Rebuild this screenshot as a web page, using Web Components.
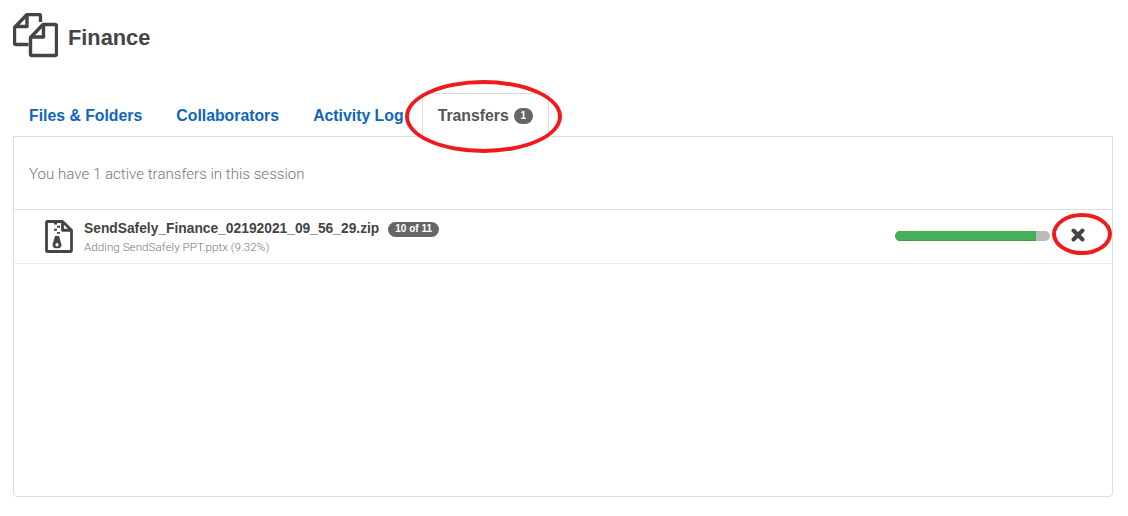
<!DOCTYPE html>
<html>
<head>
<meta charset="utf-8">
<title>Finance</title>
<style>
body { margin: 0; background: #fff; font-family: "Liberation Sans", Arial, sans-serif; color: #444; }
</style>
</head>
<body>
<workspace-page>
  <page-title slot="title">Finance</page-title>
  <tab-bar slot="tabs">
    <tab-link>Files &amp; Folders</tab-link>
    <tab-link>Collaborators</tab-link>
    <tab-link>Activity Log</tab-link>
    <tab-link active>Transfers <count-badge>1</count-badge></tab-link>
  </tab-bar>
  <transfer-panel slot="panel" summary="You have 1 active transfers in this session">
    <transfer-row name="SendSafely_Finance_02192021_09_56_29.zip" count="10 of 11" status="Adding SendSafely PPT.pptx (9.32%)" percent="91"></transfer-row>
  </transfer-panel>
  <red-ring slot="rings" style="left:405px;top:80px;width:157px;height:73px"></red-ring>
  <red-ring slot="rings" style="left:1052px;top:213px;width:60px;height:42px"></red-ring>
</workspace-page>

<script>
class WorkspacePage extends HTMLElement {
  connectedCallback() {
    this.attachShadow({ mode: 'open' }).innerHTML = `
    <style>
    :host { display: block; position: relative; width: 1128px; height: 516px; overflow: hidden; }
    .wrap { display: flex; flex-direction: column; padding: 13px 15px 0 13px; height: 516px; box-sizing: border-box; }
    </style>
    <div class="wrap">
      <slot name="title"></slot>
      <slot name="tabs"></slot>
      <slot name="panel"></slot>
    </div>
    <slot name="rings"></slot>`;
  }
}

class PageTitle extends HTMLElement {
  connectedCallback() {
    this.attachShadow({ mode: 'open' }).innerHTML = `
    <style>
    :host { display: flex; align-items: center; gap: 10px; height: 45px; margin-bottom: 35px; }
    svg { width: 45px; height: 45px; flex: none; }
    span { font-size: 21.800px; font-weight: bold; color: #444; padding-top: 5px; }
    </style>
    <svg viewBox="0 0 45 45" fill="none" stroke="#444" stroke-width="3.400" stroke-linejoin="round">
      <path d="M15.500 31.500H3q-1.500 0-1.500-1.500V14.500L14 1.500H26q1.500 0 1.500 1.500V9"/>
      <path d="M14 2.500V13.500H2.500"/>
      <path d="M30 11.500H42q1.500 0 1.500 1.500V41q0 1.500-1.500 1.500H19q-1.500 0-1.500-1.500V24.500Z"/>
      <path d="M30.500 12.500V24H18.500"/>
    </svg>
    <span><slot></slot></span>`;
  }
}

class TabBar extends HTMLElement {
  connectedCallback() {
    this.attachShadow({ mode: 'open' }).innerHTML = `
    <style>
    :host { display: flex; height: 44px; position: relative; z-index: 1; margin-bottom: -1px; }
    </style>
    <slot></slot>`;
  }
}

class TabLink extends HTMLElement {
  connectedCallback() {
    this.attachShadow({ mode: 'open' }).innerHTML = `
    <style>
    :host { display: flex; align-items: center; gap: 5px; box-sizing: border-box; height: 44px; padding: 0 15px; margin-right: 2.100px; white-space: nowrap; font-size: 15.800px; font-weight: bold; color: #0d66bb; border: 1px solid transparent; border-bottom: 0; }
    :host([active]) { color: #555; background: #fff; border-color: #ddd; }
    </style>
    <slot></slot>`;
  }
}

class CountBadge extends HTMLElement {
  connectedCallback() {
    this.attachShadow({ mode: 'open' }).innerHTML = `
    <style>
    :host { display: inline-flex; align-items: center; justify-content: center; height: 16px; min-width: 19px; box-sizing: border-box; padding: 0 6px; border-radius: 8px; background: #666; color: #fff; font-size: 10px; font-weight: bold; }
    </style>
    <slot></slot>`;
  }
}

class TransferPanel extends HTMLElement {
  connectedCallback() {
    this.attachShadow({ mode: 'open' }).innerHTML = `
    <style>
    :host { display: block; box-sizing: border-box; width: 1100px; height: 361px; border: 1px solid #ddd; border-radius: 0 0 4px 4px; }
    .summary { height: 73px; box-sizing: border-box; padding: 2px 15px 0; display: flex; align-items: center; font-family: Roboto, "Liberation Sans", sans-serif; font-weight: 300; font-size: 15.100px; color: #777; border-bottom: 1px solid #ddd; }
    </style>
    <div class="summary">${this.getAttribute('summary')}</div>
    <slot></slot>`;
  }
}

class TransferRow extends HTMLElement {
  connectedCallback() {
    const pct = this.getAttribute('percent');
    this.attachShadow({ mode: 'open' }).innerHTML = `
    <style>
    :host { display: flex; align-items: center; box-sizing: border-box; height: 54px; padding: 0 0 0 31px; border-bottom: 1px solid #eee; }
    svg.zip { width: 28px; height: 33px; flex: none; margin: 0 11px 1px 0; }
    .text { flex: 1; min-width: 0; padding-top: 2px; }
    .name { display: flex; align-items: center; gap: 9px; font-size: 13.800px; font-weight: bold; color: #444; line-height: 18px; }
    .count { display: inline-flex; align-items: center; height: 15px; padding: 0 7px; border-radius: 8px; background: #666; color: #fff; font-size: 10px; }
    .status { font-family: Roboto, "Liberation Sans", sans-serif; font-weight: 300; font-size: 11.700px; color: #777; line-height: 16px; margin-top: 1px; }
    .bar { width: 155px; height: 10px; border-radius: 5px; background: #bbb; overflow: hidden; flex: none; margin: 0 21px 1px 0; }
    .fill { height: 100%; background: #47ae5a; box-shadow: inset 0 -1px 0 #3d9a4e; }
    svg.x { width: 14px; height: 14px; flex: none; margin: 0 27px 3px 0; }
    </style>
    <svg class="zip" viewBox="0 0 28 32" preserveAspectRatio="none" fill="none" stroke="#444" stroke-width="2.800" stroke-linejoin="round">
      <path d="M2.500 1.500H17.500L26.500 10V29.500q0 1-1 1H2.500q-1 0-1-1V2.500q0-1 1-1Z"/>
      <path d="M17.500 2V10H26"/>
      <path d="M9 3.500h3M12 6.500h3M9 9.500h3M12 12.500h3" stroke-width="1.800"/>
      <path d="M10 15.500h4l2.500 8.500q0 3.500-4.500 3.500T7.500 24Z" fill="#444" stroke="none"/>
      <circle cx="12" cy="24" r="1.600" fill="#fff" stroke="none"/>
    </svg>
    <div class="text">
      <div class="name"><span>${this.getAttribute('name')}</span><span class="count">${this.getAttribute('count')}</span></div>
      <div class="status">${this.getAttribute('status')}</div>
    </div>
    <div class="bar"><div class="fill" style="width:${pct}%"></div></div>
    <svg class="x" viewBox="0 0 14 14"><path d="M2.500 2.500L11.500 11.500M11.500 2.500L2.500 11.500" stroke="#444" stroke-width="4" stroke-linecap="round"/></svg>`;
  }
}

class RedRing extends HTMLElement {
  connectedCallback() {
    this.attachShadow({ mode: 'open' }).innerHTML = `
    <style>
    :host { display: block; position: absolute; box-sizing: border-box; border: 4px solid #f0191c; border-radius: 50%; z-index: 5; pointer-events: none; }
    </style>`;
  }
}

customElements.define('workspace-page', WorkspacePage);
customElements.define('page-title', PageTitle);
customElements.define('tab-bar', TabBar);
customElements.define('tab-link', TabLink);
customElements.define('count-badge', CountBadge);
customElements.define('transfer-panel', TransferPanel);
customElements.define('transfer-row', TransferRow);
customElements.define('red-ring', RedRing);
</script>
</body>
</html>
